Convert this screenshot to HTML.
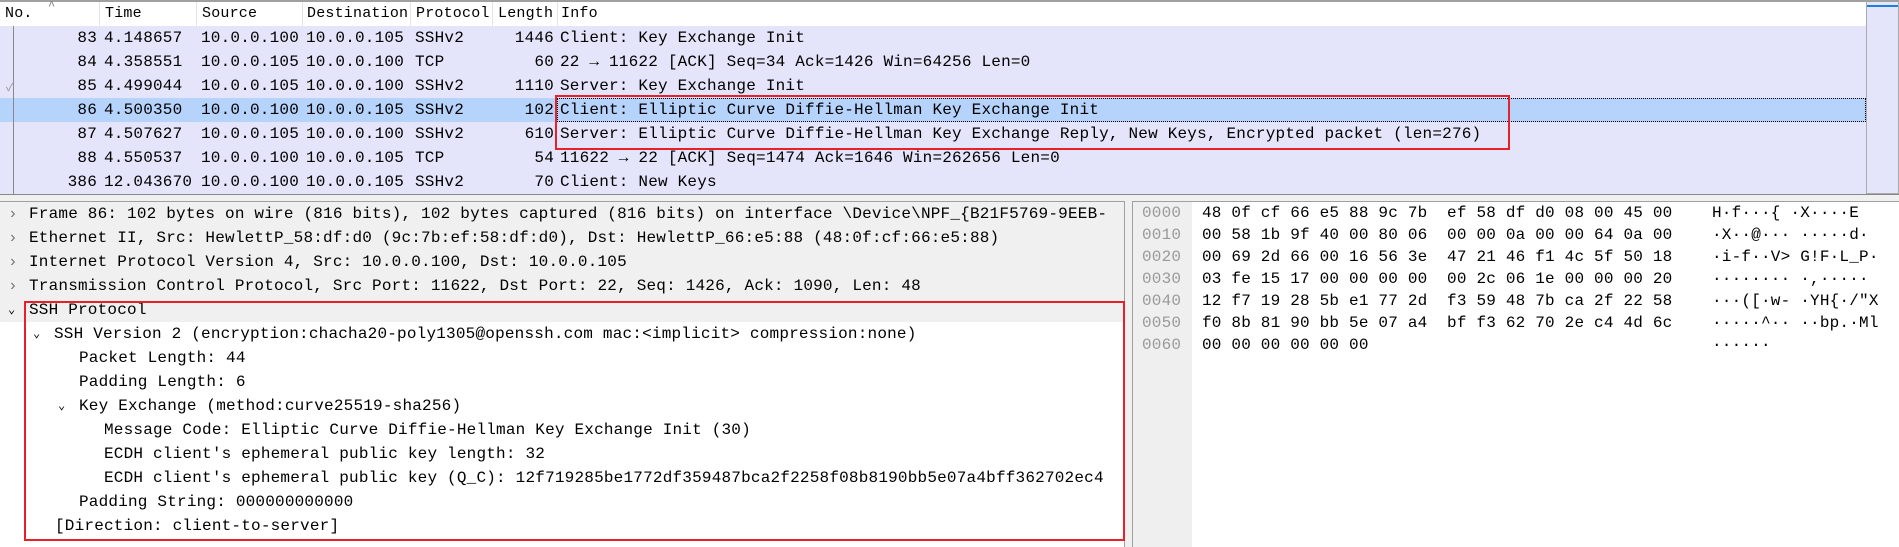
<!DOCTYPE html>
<html><head><meta charset="utf-8">
<style>
*{margin:0;padding:0;box-sizing:border-box}
body{width:1899px;height:547px;overflow:hidden;background:#f0f0f0;position:relative;font-family:"Liberation Mono","Noto Sans CJK SC",monospace;font-size:16px;letter-spacing:0.2px;color:#000}
.a{position:absolute;white-space:pre;line-height:24px}
.r{text-align:right}
</style></head><body>
<!-- packet list -->
<div class="a" style="left:0;top:0;width:1866px;height:194px;background:#e4e4fa;border-top:2px solid #a0a0a0"></div>
<div class="a" style="left:0;top:2px;width:1866px;height:24px;background:#fff"></div>
<div class="a" style="left:99px;top:2px;width:1px;height:24px;background:#e4e4e4"></div>
<div class="a" style="left:196px;top:2px;width:1px;height:24px;background:#e4e4e4"></div>
<div class="a" style="left:302px;top:2px;width:1px;height:24px;background:#e4e4e4"></div>
<div class="a" style="left:410px;top:2px;width:1px;height:24px;background:#e4e4e4"></div>
<div class="a" style="left:492px;top:2px;width:1px;height:24px;background:#e4e4e4"></div>
<div class="a" style="left:557px;top:2px;width:1px;height:24px;background:#e4e4e4"></div>
<div class="a" style="top:2px;left:5px;font-size:15px">No.</div>
<div class="a" style="top:-6px;left:48px;font-size:12px;color:#777">^</div>
<div class="a" style="top:2px;left:105px;font-size:15px">Time</div>
<div class="a" style="top:2px;left:202px;font-size:15px">Source</div>
<div class="a" style="top:2px;left:307px;font-size:15px">Destination</div>
<div class="a" style="top:2px;left:416px;font-size:15px">Protocol</div>
<div class="a" style="top:2px;left:498px;font-size:15px">Length</div>
<div class="a" style="top:2px;left:561px;font-size:15px">Info</div>
<div class="a" style="left:0;top:98px;width:1866px;height:24px;background:#b6d4fb"></div>
<div class="a" style="left:557px;top:98px;width:1309px;height:24px;border:1px dotted #000"></div>
<div class="a" style="left:13px;top:26px;width:1px;height:168px;background:#888"></div>
<div class="a" style="left:6px;top:76px;font-size:12px;color:#999">✓</div>

<div class="a r" style="top:26px;left:0;width:97px">83</div><div class="a" style="top:26px;left:104px">4.148657</div><div class="a" style="top:26px;left:201px">10.0.0.100</div><div class="a" style="top:26px;left:306px">10.0.0.105</div><div class="a" style="top:26px;left:415px">SSHv2</div><div class="a r" style="top:26px;left:470px;width:84px">1446</div><div class="a" style="top:26px;left:560px">Client: Key Exchange Init</div>
<div class="a r" style="top:50px;left:0;width:97px">84</div><div class="a" style="top:50px;left:104px">4.358551</div><div class="a" style="top:50px;left:201px">10.0.0.105</div><div class="a" style="top:50px;left:306px">10.0.0.100</div><div class="a" style="top:50px;left:415px">TCP</div><div class="a r" style="top:50px;left:470px;width:84px">60</div><div class="a" style="top:50px;left:560px">22 → 11622 [ACK] Seq=34 Ack=1426 Win=64256 Len=0</div>
<div class="a r" style="top:74px;left:0;width:97px">85</div><div class="a" style="top:74px;left:104px">4.499044</div><div class="a" style="top:74px;left:201px">10.0.0.105</div><div class="a" style="top:74px;left:306px">10.0.0.100</div><div class="a" style="top:74px;left:415px">SSHv2</div><div class="a r" style="top:74px;left:470px;width:84px">1110</div><div class="a" style="top:74px;left:560px">Server: Key Exchange Init</div>
<div class="a r" style="top:98px;left:0;width:97px">86</div><div class="a" style="top:98px;left:104px">4.500350</div><div class="a" style="top:98px;left:201px">10.0.0.100</div><div class="a" style="top:98px;left:306px">10.0.0.105</div><div class="a" style="top:98px;left:415px">SSHv2</div><div class="a r" style="top:98px;left:470px;width:84px">102</div><div class="a" style="top:98px;left:560px">Client: Elliptic Curve Diffie-Hellman Key Exchange Init</div>
<div class="a r" style="top:122px;left:0;width:97px">87</div><div class="a" style="top:122px;left:104px">4.507627</div><div class="a" style="top:122px;left:201px">10.0.0.105</div><div class="a" style="top:122px;left:306px">10.0.0.100</div><div class="a" style="top:122px;left:415px">SSHv2</div><div class="a r" style="top:122px;left:470px;width:84px">610</div><div class="a" style="top:122px;left:560px">Server: Elliptic Curve Diffie-Hellman Key Exchange Reply, New Keys, Encrypted packet (len=276)</div>
<div class="a r" style="top:146px;left:0;width:97px">88</div><div class="a" style="top:146px;left:104px">4.550537</div><div class="a" style="top:146px;left:201px">10.0.0.100</div><div class="a" style="top:146px;left:306px">10.0.0.105</div><div class="a" style="top:146px;left:415px">TCP</div><div class="a r" style="top:146px;left:470px;width:84px">54</div><div class="a" style="top:146px;left:560px">11622 → 22 [ACK] Seq=1474 Ack=1646 Win=262656 Len=0</div>
<div class="a r" style="top:170px;left:0;width:97px">386</div><div class="a" style="top:170px;left:104px">12.043670</div><div class="a" style="top:170px;left:201px">10.0.0.100</div><div class="a" style="top:170px;left:306px">10.0.0.105</div><div class="a" style="top:170px;left:415px">SSHv2</div><div class="a r" style="top:170px;left:470px;width:84px">70</div><div class="a" style="top:170px;left:560px">Client: New Keys</div>

<div class="a" style="left:555px;top:95px;width:955px;height:55px;border:2px solid #e8202a"></div>
<!-- scrollbar -->
<div class="a" style="left:1866px;top:0;width:33px;height:194px;background:#e4e4fa;border:1px solid #aaa;border-top:2px solid #a0a0a0"></div>
<div class="a" style="left:1867px;top:5px;width:31px;height:2px;background:#1a7fe0"></div>
<div class="a" style="left:0;top:194px;width:1899px;height:1px;background:#888"></div>

<!-- details pane -->
<div class="a" style="left:0;top:201px;width:1125px;height:346px;background:#fff;border-top:1px solid #a0a0a0;border-right:1px solid #a0a0a0"></div>
<div class="a" style="left:0;top:202px;width:1124px;height:120px;background:#f0f0f0"></div>
<div class="a" style="left:8px;top:202px;color:#777">›</div><div class="a" style="left:29px;top:202px">Frame 86: 102 bytes on wire (816 bits), 102 bytes captured (816 bits) on interface \Device\NPF_{B21F5769-9EEB-</div>
<div class="a" style="left:8px;top:226px;color:#777">›</div><div class="a" style="left:29px;top:226px">Ethernet II, Src: HewlettP_58:df:d0 (9c:7b:ef:58:df:d0), Dst: HewlettP_66:e5:88 (48:0f:cf:66:e5:88)</div>
<div class="a" style="left:8px;top:250px;color:#777">›</div><div class="a" style="left:29px;top:250px">Internet Protocol Version 4, Src: 10.0.0.100, Dst: 10.0.0.105</div>
<div class="a" style="left:8px;top:274px;color:#777">›</div><div class="a" style="left:29px;top:274px">Transmission Control Protocol, Src Port: 11622, Dst Port: 22, Seq: 1426, Ack: 1090, Len: 48</div>
<div class="a" style="left:8px;top:298px;font-size:12px">⌄</div><div class="a" style="left:29px;top:298px">SSH Protocol</div>
<div class="a" style="left:33px;top:322px;font-size:12px">⌄</div><div class="a" style="left:54px;top:322px">SSH Version 2 (encryption:chacha20-poly1305@openssh.com mac:&lt;implicit&gt; compression:none)</div>
<div class="a" style="left:79px;top:346px">Packet Length: 44</div>
<div class="a" style="left:79px;top:370px">Padding Length: 6</div>
<div class="a" style="left:58px;top:394px;font-size:12px">⌄</div><div class="a" style="left:79px;top:394px">Key Exchange (method:curve25519-sha256)</div>
<div class="a" style="left:104px;top:418px">Message Code: Elliptic Curve Diffie-Hellman Key Exchange Init (30)</div>
<div class="a" style="left:104px;top:442px">ECDH client's ephemeral public key length: 32</div>
<div class="a" style="left:104px;top:466px;width:1020px;overflow:hidden">ECDH client's ephemeral public key (Q_C): 12f719285be1772df359487bca2f2258f08b8190bb5e07a4bff362702ec4</div>
<div class="a" style="left:79px;top:490px">Padding String: 000000000000</div>
<div class="a" style="left:55px;top:514px">[Direction: client-to-server]</div>
<div class="a" style="left:24px;top:301px;width:1101px;height:240px;border:2px solid #e8202a"></div>

<!-- hex pane -->
<div class="a" style="left:1132px;top:201px;width:767px;height:346px;background:#fff;border-top:1px solid #a0a0a0;border-left:1px solid #a0a0a0"></div>
<div class="a" style="left:1133px;top:202px;width:59px;height:345px;background:#efefef"></div>
<div class="a" style="left:1142px;top:202px;line-height:22px;color:#999">0000
0010
0020
0030
0040
0050
0060</div>
<div class="a" style="left:1202px;top:202px;line-height:22px">48 0f cf 66 e5 88 9c 7b  ef 58 df d0 08 00 45 00
00 58 1b 9f 40 00 80 06  00 00 0a 00 00 64 0a 00
00 69 2d 66 00 16 56 3e  47 21 46 f1 4c 5f 50 18
03 fe 15 17 00 00 00 00  00 2c 06 1e 00 00 00 20
12 f7 19 28 5b e1 77 2d  f3 59 48 7b ca 2f 22 58
f0 8b 81 90 bb 5e 07 a4  bf f3 62 70 2e c4 4d 6c
00 00 00 00 00 00</div>
<div class="a" style="left:1712px;top:202px;line-height:22px">H·f···{ ·X····E
·X··@··· ·····d·
·i-f··V> G!F·L_P·
········ ·,·····
···([·w- ·YH{·/"X
·····^·· ··bp.·Ml
······</div>
</body></html>
